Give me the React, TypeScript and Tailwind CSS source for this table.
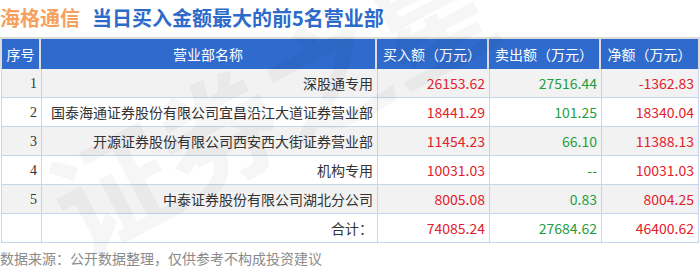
import React from "react";

type Row = {
  idx: string;
  name: string;
  buy: string;
  sell: string;
  net: string;
};

const rows: Row[] = [
  { idx: "1", name: "深股通专用", buy: "26153.62", sell: "27516.44", net: "-1362.83" },
  { idx: "2", name: "国泰海通证券股份有限公司宜昌沿江大道证券营业部", buy: "18441.29", sell: "101.25", net: "18340.04" },
  { idx: "3", name: "开源证券股份有限公司西安西大街证券营业部", buy: "11454.23", sell: "66.10", net: "11388.13" },
  { idx: "4", name: "机构专用", buy: "10031.03", sell: "--", net: "10031.03" },
  { idx: "5", name: "中泰证券股份有限公司湖北分公司", buy: "8005.08", sell: "0.83", net: "8004.25" },
];

const cjk = "font-['Noto_Sans_CJK_SC',sans-serif]";

function BodyRow({ r, shaded }: { r: Row; shaded: boolean }) {
  return (
    <div
      className={`grid grid-cols-[40px_336px_112px_112px_97px] h-[29px] text-[14px] ${shaded ? "bg-[#f2f2f2]" : "bg-white"}`}
    >
      <div className="border-r border-b border-[#c3d6ea] flex items-center justify-end pr-[4px] font-['Liberation_Serif',serif] text-[#333]">
        {r.idx}
      </div>
      <div className="border-r border-b border-[#c3d6ea] flex items-center justify-end pr-[4px] text-[#333] whitespace-nowrap">
        {r.name}
      </div>
      <div className="border-r border-b border-[#c3d6ea] flex items-center justify-end pr-[4px] text-[#e3212b]">
        {r.buy}
      </div>
      <div className="border-r border-b border-[#c3d6ea] flex items-center justify-end pr-[4px] text-[#1f9e41]">
        {r.sell}
      </div>
      <div className="border-r border-b border-[#c3d6ea] flex items-center justify-end pr-[4px] text-[#e3212b]">
        {r.net}
      </div>
    </div>
  );
}

export default function App() {
  return (
    <div className={`relative w-[700px] h-[274px] bg-white overflow-hidden ${cjk}`}>
      {/* title */}
      <div className="h-[37px] flex items-center gap-[12px] text-[20px] font-bold leading-none pb-[2px]">
        <span className="text-[#f7a05e]">海格通信</span>
        <span className="text-[#2c6bc9]">当日买入金额最大的前5名营业部</span>
      </div>

      {/* header */}
      <div className="grid grid-cols-[37px_334px_110px_110px_97px] gap-[2px] p-[2px] pb-0 bg-[#dcdcdc] text-white text-[14px]">
        <div className="bg-[#2f6bcc] h-[30px] flex items-center justify-center">序号</div>
        <div className="bg-[#2f6bcc] h-[30px] flex items-center justify-center">营业部名称</div>
        <div className="bg-[#2f6bcc] h-[30px] flex items-center justify-center">买入额（万元）</div>
        <div className="bg-[#2f6bcc] h-[30px] flex items-center justify-center">卖出额（万元）</div>
        <div className="bg-[#2f6bcc] h-[30px] flex items-center justify-center">净额（万元）</div>
      </div>

      {/* body */}
      <div className="ml-[1px] w-[698px] border-l border-[#c3d6ea]">
        {rows.map((r, i) => (
          <BodyRow key={r.idx} r={r} shaded={i % 2 === 0} />
        ))}
        <BodyRow r={{ idx: "", name: "合计：", buy: "74085.24", sell: "27684.62", net: "46400.62" }} shaded={false} />
      </div>

      <div className="mt-[5px] text-[14px] text-[#8a8a8a] leading-[20px]">
        数据来源：公开数据整理，仅供参考不构成投资建议
      </div>

      {/* watermark */}
      <div className="pointer-events-none absolute left-[30px] top-[40px] -rotate-[28deg] text-[120px] font-bold text-black/[0.035] whitespace-nowrap leading-none">
        证券之星
      </div>
    </div>
  );
}
